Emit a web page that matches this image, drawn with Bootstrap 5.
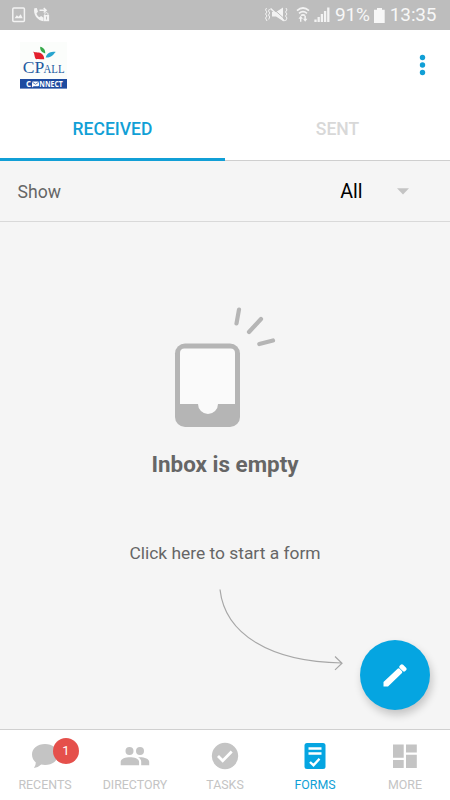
<!DOCTYPE html>
<html lang="en">
<head>
<meta charset="utf-8">
<meta name="viewport" content="width=device-width, initial-scale=1">
<title>Forms</title>
<link href="https://cdn.jsdelivr.net/npm/bootstrap@5.3.0/dist/css/bootstrap.min.css" rel="stylesheet">
<style>
:root{--accent:#119fd6;--muted:#c4c4c4}
body{font-family:Roboto,"Liberation Sans",sans-serif;background:#f5f5f5;height:800px;overflow:hidden;line-height:1}
svg{display:block;flex:none}
.status-bar{height:30px;background:#bdbdbd;color:#f7f7f7;font-size:19px;letter-spacing:-.15px}
.status-bar span{margin-top:-1px}
.app-bar{height:70px}
.tab-strip{height:61px;border-bottom:1px solid #cfcfcf}
.tab-strip .nav-link{height:61px;border-radius:0;color:#d8d8d8;font-size:17.5px;font-weight:500;border-bottom:3px solid transparent}
.tab-strip .nav-link span{padding-top:2px}
.tab-strip .nav-link.active{color:var(--accent);border-bottom-color:var(--accent)}
.filter-bar{height:61px;border-bottom:1px solid #d9d9d9;padding:1px 41px 0 17.5px;color:#666;font-size:17.6px}
.filter-label{padding-top:2px}
.filter-value{color:#000;font-size:19.6px;margin-right:34.5px;padding-top:1px}
.empty-title{font-size:22.4px;font-weight:700;color:#666;padding-top:.5px}
.empty-hint{font-size:17.4px;color:#666;margin-top:70px}
.fab{width:70px;height:70px;right:20px;top:640px;background:#05a5e1;box-shadow:2px 5px 8px rgba(0,0,0,.2)}
.bottom-nav{height:71px;border-top:1px solid #d0d0d0}
.bottom-nav .nav-link{color:var(--muted);font-size:12.400px;padding:12px 0 0;flex:1 1 0}
.bottom-nav .nav-link span{padding-top:.6px}
.bottom-nav .nav-link.active{color:var(--accent)}
.bottom-nav .nav-link .count{width:26px;height:26px;left:53px;top:7.500px;background:#e5504b;font-size:13px;padding:0}
</style>
</head>
<body class="d-flex flex-column">
<header class="bg-white">
  <div class="status-bar d-flex align-items-center">
    <svg width="265" height="30" fill="none" stroke="#f3f3f3">
      <rect x="12.800" y="8" width="11.600" height="13.400" rx="1" stroke-width="1.500"/>
      <path d="M14.600 18.200l2.200-3 1.700 1.600 2.200-2.600 2 4z" fill="#f3f3f3" stroke="none"/>
      <path d="M34.300 8.300c-1.500 6 3.500 12.800 9.200 12.900v-3.500l-2.400-1.700-1.700 1.200c-1.700-1.100-2.500-2.300-2.900-4l1.500-1.500-1.200-3.800z" fill="#f3f3f3" stroke="none"/>
      <path d="M39.500 10.300H46M43.700 8l2.500 2.300-2.500 2.300" stroke-width="1.400"/>
      <path d="M44.800 15.200v-1c0-2.100 3.200-2.100 3.200 0v1" stroke-width="1"/><rect x="43.800" y="15" width="5.300" height="6.200" fill="#f3f3f3" stroke="none"/><path d="M46.500 16.500v3" stroke="#bdbdbd" stroke-width=".9"/>
    </svg>
    <svg width="70" height="30" viewBox="265 0 70 30" fill="none" stroke="#f3f3f3">
      <path d="M266.500 8l-1 2 1.500 2-1.500 2 1.500 2-1.500 2 1.500 3M269.500 9l-1 2 1.200 2-1.200 2 1.200 2-1 2.500M286 8l1 2-1.500 2 1.500 2-1.500 2 1.500 2-1.500 3" stroke-width="1"/>
      <path d="M272 12h4l7-4.500v13.500l-7-4.500h-4z" fill="#f3f3f3" stroke="none"/><path d="M270.500 8.500l14 12.500" stroke-width="1.600"/><path d="M271.500 7.300l13.500 12" stroke="#bdbdbd" stroke-width="1"/>
      <path d="M297 10.700q6-5.400 12 0M299 13.300q4-3.300 8 0M301 15.700q2-1.700 4 0" stroke-width="1.700"/>
      <path d="M298.500 18.800l2.200-3 2.200 3h-1.500v3H300v-3zM303 18.800h1.400v-3h1.500v3h1.500l-2.200 3z" fill="#f3f3f3" stroke="none"/>
      <path d="M315.500 22v-2.500M318.700 22v-5M321.900 22v-8M325.100 22V11M328.300 22V7.500" stroke-width="2.300"/>
    </svg>
    <span>91%</span>
    <svg class="ms-1" width="12" height="15"><path d="M0 1.700h3V0h5v1.700h2.700V15H0z" fill="#f7f7f7"/></svg>
    <span class="ms-1">13:35</span>
  </div>
  <div class="app-bar d-flex align-items-center justify-content-between px-3">
    <svg width="56" height="50" viewBox="16 40 56 50">
      <rect x="20" y="42" width="47" height="47" fill="#fbfdfb"/>
      <path d="M40.200 46.800c3 .7 5.200 2.700 5 6.700-3-.9-5.400-3-5-6.700z" fill="#37a94a"/>
      <path d="M33 51.500c2.500 1.500 6.500.2 9 2.500 1.800 1.700 2.200 3.500 2.200 5.300-2.700.3-5.300-.6-8-.1-2.200-2-1.200-5.500-3.200-7.700z" fill="#e3202c"/>
      <path d="M45.700 57.500c1.500-5 6-5.800 10-5.600-2.500 2-3 5.600-9.700 5.600z" fill="#28a5cf"/>
      <text x="22.800" y="73" font-family="Liberation Serif" font-size="17.500" letter-spacing="0" textLength="21.500" lengthAdjust="spacingAndGlyphs" fill="#225aa0">CP</text>
      <text x="43.500" y="73" font-family="Liberation Serif" font-size="13" letter-spacing="0" textLength="21" lengthAdjust="spacingAndGlyphs" fill="#225aa0">ALL</text>
      <rect x="20" y="79" width="47" height="9.600" fill="#1d4ba0"/>
      <text x="26" y="86.700" font-family="Open Sans" font-weight="700" font-size="8" fill="#fff">C</text>
      <rect x="32" y="81.600" width="7" height="4.600" rx="1" fill="#fff"/><path d="M32.500 82.300l3 2 3-2" fill="none" stroke="#1d4ba0" stroke-width=".7"/><path d="M32 85v2.500l2-1.800z" fill="#fff"/>
      <text x="39.300" y="86.700" font-family="Open Sans" font-weight="700" font-size="8" textLength="23.500" lengthAdjust="spacingAndGlyphs" fill="#fff">NNECT</text>
    </svg>
    <svg width="24" height="24" viewBox="410 53 24 24" fill="#119fd6"><circle cx="422.500" cy="57.500" r="2.700"/><circle cx="422.500" cy="65" r="2.700"/><circle cx="422.500" cy="72.500" r="2.700"/></svg>
  </div>
  <nav class="tab-strip nav nav-fill flex-nowrap">
    <a class="nav-link active w-50 p-0 d-flex align-items-center justify-content-center" href="#"><span>RECEIVED</span></a>
    <a class="nav-link w-50 p-0 d-flex align-items-center justify-content-center" href="#"><span>SENT</span></a>
  </nav>
</header>
<section class="filter-bar d-flex align-items-center">
  <span class="filter-label me-auto">Show</span>
  <span class="filter-value">All</span>
  <svg width="12" height="7"><path d="M0 .3h12L6 6.500z" fill="#c4c4c4"/></svg>
</section>
<main class="flex-grow-1 d-flex flex-column align-items-center">
  <svg width="450" height="230" viewBox="0 222 450 230">
    <g stroke="#b5b5b5" stroke-width="4.200" stroke-linecap="round"><path d="M239 309.500L236.500 323.500M261 319L249 332M273 340.500L259.300 344"/></g>
    <rect x="175" y="343.500" width="65" height="83.500" rx="10" fill="#b5b5b5"/>
    <path d="M184.500 348.500h46q4.500 0 4.500 4.500v51h-17a10 10 0 0 1-20 0h-18V353q0-4.500 4.500-4.500z" fill="#fafafa"/>
  </svg>
  <div class="empty-title">Inbox is empty</div>
  <div class="empty-hint">Click here to start a form</div>
  <svg class="mt-3" width="450" height="100" viewBox="0 578 450 100" fill="none" stroke="#a7a7a7" stroke-width="1.200"><path d="M220 589.500C225 634 270 662 342 663M335 656.500l7 6.700-7 6.700"/></svg>
</main>
<a class="fab position-absolute rounded-circle d-flex align-items-center justify-content-center" href="#" aria-label="New form">
  <svg width="30" height="30" viewBox="380 660 30 30" fill="#fff"><path d="M383.500 682v4.500h4.500l14-13.500q.8-1-.2-2l-2.200-2.200q-1-.9-2 0zM399.500 666l1.200-1.200q1.200-1 2.400 0l3 3q1.200 1.200.2 2.300l-1.300 1.200q-1 .8-2 0l-3.400-3.300q-.8-1-.1-2z"/></svg>
</a>
<nav class="bottom-nav nav flex-nowrap bg-white">
  <a class="nav-link position-relative d-flex flex-column align-items-center" href="#">
    <svg width="30" height="28" viewBox="30 742 30 28" fill="#c4c4c4"><path d="M45 744c7.500 0 13 4.500 13 10.500S52.500 765 45 765q-2 0-3.800-.4-2.500 2.700-7.200 3.400 1.800-2.300 1.800-5.500c-2.400-2-3.800-4.800-3.800-8C32 748.500 37.500 744 45 744z"/></svg>
    <span class="count position-absolute rounded-circle text-white d-flex align-items-center justify-content-center">1</span>
    <span class="mt-2">RECENTS</span>
  </a>
  <a class="nav-link d-flex flex-column align-items-center" href="#">
    <svg width="30" height="28" viewBox="120 742 30 28" fill="#c4c4c4"><circle cx="129.500" cy="751" r="4"/><circle cx="140" cy="751" r="4"/><path d="M120.700 765.300v-3.500c0-3.300 5-4.600 9.200-4.600s9.200 1.300 9.200 4.600v3.500zM138 757.300c5-.6 11.200 1 11.200 4.500v3.500h-8v-3.500c0-2-1.200-3.500-3.200-4.500z"/></svg>
    <span class="mt-2">DIRECTORY</span>
  </a>
  <a class="nav-link d-flex flex-column align-items-center" href="#">
    <svg width="30" height="28" viewBox="210 742 30 28"><circle cx="225" cy="756" r="13.200" fill="#c4c4c4"/><path d="M218 756l4.700 4.700 9-9.200" fill="none" stroke="#fff" stroke-width="2.800"/></svg>
    <span class="mt-2">TASKS</span>
  </a>
  <a class="nav-link active d-flex flex-column align-items-center" href="#">
    <svg width="30" height="28" viewBox="300 742 30 28"><rect x="304.500" y="743" width="21" height="26" rx="2.500" fill="#05a5e1"/><path d="M308.500 748.500h13M308.500 753.500h13M310 762l3.500 3.300 6-6.500" fill="none" stroke="#fff" stroke-width="2.400"/></svg>
    <span class="mt-2">FORMS</span>
  </a>
  <a class="nav-link d-flex flex-column align-items-center" href="#">
    <svg width="30" height="28" viewBox="390 742 30 28" fill="#c4c4c4"><path d="M393 744.500h10.700v13.300H393zM406 744.500h10.800v8H406zM393 760h10.700v8H393zM406 754.800h10.800V768H406z"/></svg>
    <span class="mt-2">MORE</span>
  </a>
</nav>
<script src="https://cdn.jsdelivr.net/npm/bootstrap@5.3.0/dist/js/bootstrap.bundle.min.js"></script>
</body>
</html>
